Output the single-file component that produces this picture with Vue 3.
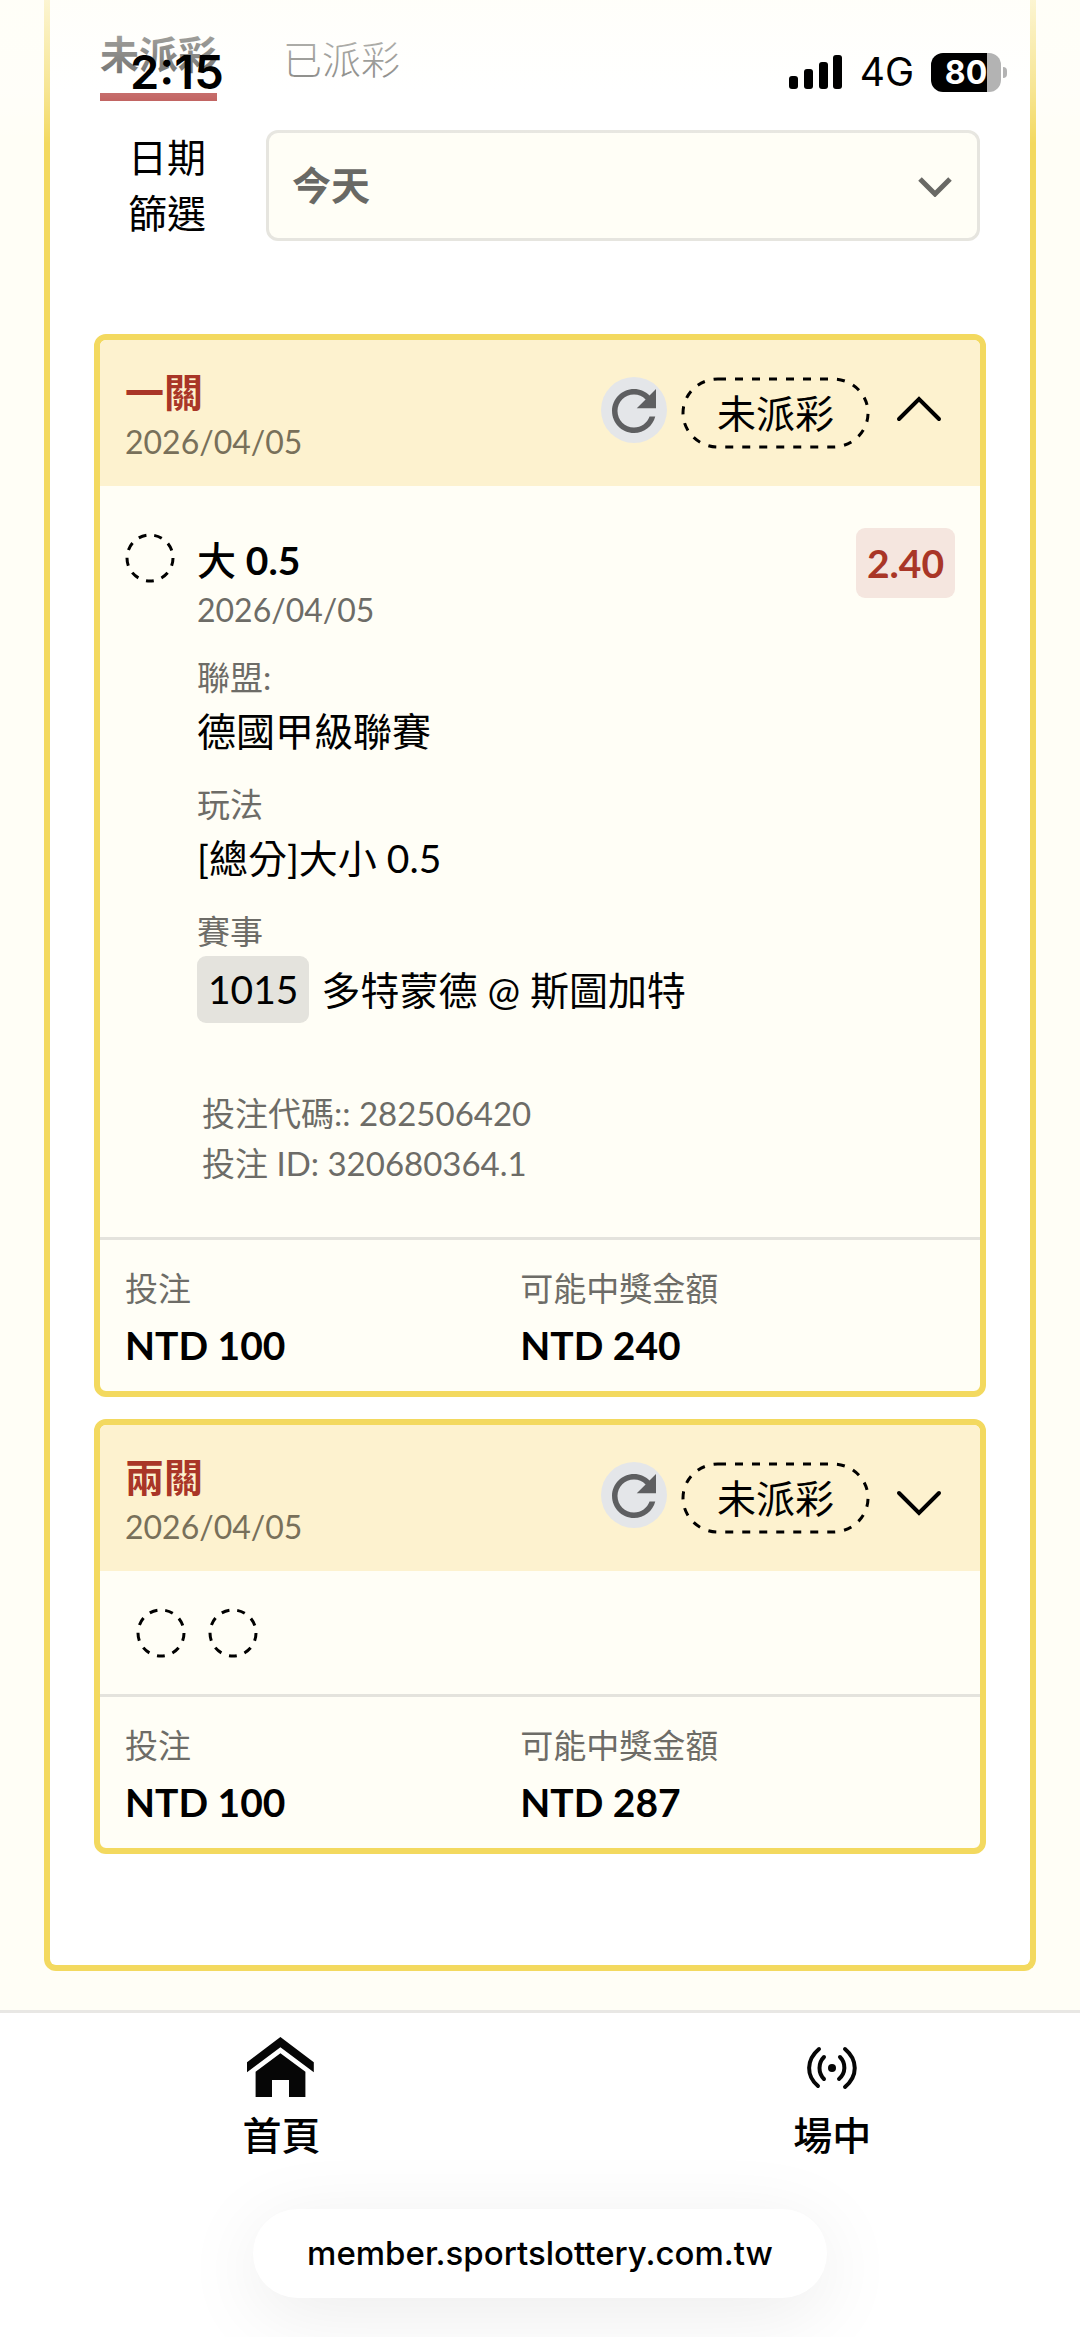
<script setup>
import { ref } from 'vue'

const range = ref('today')

const tickets = ref([
  {
    title: '一關',
    date: '2026/04/05',
    status: '未派彩',
    open: true,
    legs: [
      {
        pick: '大',
        line: '0.5',
        date: '2026/04/05',
        odds: '2.40',
        league: '德國甲級聯賽',
        market: '[總分]大小 0.5',
        code: '1015',
        match: '多特蒙德 @ 斯圖加特'
      }
    ],
    slip: ['投注代碼:: 282506420', '投注 ID: 320680364.1'],
    stake: 'NTD 100',
    payout: 'NTD 240'
  },
  {
    title: '兩關',
    date: '2026/04/05',
    status: '未派彩',
    open: false,
    legs: [{}, {}],
    slip: [],
    stake: 'NTD 100',
    payout: 'NTD 287'
  }
])
</script>

<template>
  <div class="page">
    <header class="status-bar">
      <span class="clock">2:15</span>
      <div class="status-icons">
        <svg class="signal" viewBox="0 0 54 34" aria-hidden="true">
          <rect x="0" y="21" width="9" height="13" rx="3" />
          <rect x="15" y="14" width="9" height="20" rx="3" />
          <rect x="30" y="7" width="9" height="27" rx="3" />
          <rect x="44" y="0" width="9" height="34" rx="3" />
        </svg>
        <span class="network">4G</span>
        <span class="battery"><span class="battery-level">80</span></span>
      </div>
    </header>

    <main class="panel">
      <div class="tabs">
        <button class="tab active" type="button">未派彩</button>
        <button class="tab" type="button">已派彩</button>
      </div>

      <div class="filter">
        <label for="range">日期篩選</label>
        <div class="select-wrap">
          <select id="range" v-model="range">
            <option value="today">今天</option>
          </select>
          <svg class="select-arrow" viewBox="0 0 34 20" aria-hidden="true">
            <path d="M2 2 17 17 32 2" />
          </svg>
        </div>
      </div>

      <section class="tickets">
        <article v-for="t in tickets" :key="t.title" class="ticket">
          <div class="ticket-head">
            <div class="ticket-name">
              <h2>{{ t.title }}</h2>
              <p class="muted date">{{ t.date }}</p>
            </div>
            <button class="refresh" type="button" aria-label="refresh">
              <svg viewBox="0 -0.4 24 24" aria-hidden="true">
                <path d="M17.65 6.35C16.2 4.9 14.21 4 12 4c-4.42 0-7.99 3.58-7.99 8s3.57 8 7.99 8c3.73 0 6.84-2.55 7.73-6h-2.08c-.82 2.33-3.04 4-5.65 4-3.31 0-6-2.69-6-6s2.69-6 6-6c1.66 0 3.14.69 4.22 1.78L13 11h7V4l-2.35 2.35z" />
              </svg>
            </button>
            <span class="state">
              <svg aria-hidden="true"><rect x="2" y="2" rx="35" ry="35" /></svg>
              {{ t.status }}
            </span>
            <button class="toggle" type="button" :aria-expanded="t.open" aria-label="toggle" @click="t.open = !t.open">
              <svg viewBox="0 0 46 40" aria-hidden="true">
                <path :d="t.open ? 'M3 26 23 6 43 26' : 'M3 15 23 35 43 15'" />
              </svg>
            </button>
          </div>

          <div v-if="t.open" class="ticket-body">
            <div v-for="leg in t.legs" :key="leg.code" class="leg">
              <svg class="ring" viewBox="0 0 50 50" aria-hidden="true"><circle cx="25" cy="25" r="23" /></svg>
              <div class="leg-info">
                <h3>{{ leg.pick }} <b>{{ leg.line }}</b></h3>
                <p class="muted date">{{ leg.date }}</p>
                <dl>
                  <div>
                    <dt>聯盟:</dt>
                    <dd>{{ leg.league }}</dd>
                  </div>
                  <div>
                    <dt>玩法</dt>
                    <dd>{{ leg.market }}</dd>
                  </div>
                  <div>
                    <dt>賽事</dt>
                    <dd class="match"><span class="code">{{ leg.code }}</span>{{ leg.match }}</dd>
                  </div>
                </dl>
                <div class="slip">
                  <p v-for="line in t.slip" :key="line" class="muted">{{ line }}</p>
                </div>
              </div>
              <span class="odds">{{ leg.odds }}</span>
            </div>
          </div>
          <div v-else class="ticket-rings">
            <svg v-for="(leg, i) in t.legs" :key="i" class="ring" viewBox="0 0 50 50" aria-hidden="true">
              <circle cx="25" cy="25" r="23" />
            </svg>
          </div>

          <dl class="totals">
            <div>
              <dt>投注</dt>
              <dd>{{ t.stake }}</dd>
            </div>
            <div>
              <dt>可能中獎金額</dt>
              <dd>{{ t.payout }}</dd>
            </div>
          </dl>
        </article>
      </section>
    </main>

    <footer class="bottom">
      <nav>
        <a href="#home">
          <svg class="nav-icon" viewBox="0 0 68 62" aria-hidden="true">
            <path d="M0 25.300 33.400 0 66.800 25.300V35.300L33.400 10.300 0 35.300z" />
            <path d="M8.600 34.700 33.400 16.300 58.400 34.700V60H42V43H25V60H8.600z" />
          </svg>
          首頁
        </a>
        <a href="#live">
          <svg class="nav-icon live" viewBox="-34 -31 68 62" aria-hidden="true">
            <path d="M-13 -19C-26 -8 -26 8 -14 18M13 -19C26 -8 26 8 13 19M-8 -11C-14 -5 -14 5 -8 11M8 -11C14 -5 14 5 7 11" />
            <circle r="4" />
          </svg>
          場中
        </a>
      </nav>
      <div class="address">member.sportslottery.com.tw</div>
    </footer>
  </div>
</template>

<style>
body {
  margin: 0;
  background: #fffef6;
}
</style>

<style scoped>
* {
  box-sizing: border-box;
}

.page {
  position: relative;
  display: flex;
  flex-direction: column;
  min-height: 100vh;
  overflow: hidden;
  background: #fffef6;
  color: #000;
  font-family: Lato, "Noto Sans CJK TC", sans-serif;
  font-size: 39px;
  line-height: 58px;
}

h2,
h3,
p,
dl,
dd {
  margin: 0;
}

button {
  padding: 0;
  border: 0;
  background: none;
  color: inherit;
  font: inherit;
}

.status-bar {
  position: absolute;
  inset: 0 0 auto;
  z-index: 1;
  display: flex;
  align-items: center;
  justify-content: space-between;
  height: 144px;
  padding: 0 73px 0 130px;
  background: linear-gradient(rgba(255, 254, 248, 0.75), rgba(255, 255, 255, 0.3) 65%, rgba(255, 255, 255, 0));
  font-family: Inter, sans-serif;
  pointer-events: none;
}

.clock {
  font-size: 47px;
  font-weight: 600;
}

.status-icons {
  display: flex;
  align-items: center;
}

.signal {
  width: 54px;
  height: 34px;
  margin-right: 17px;
}

.network {
  margin-right: 17px;
  font-size: 39px;
}

.battery {
  position: relative;
  width: 70px;
  height: 39px;
  margin-right: 6px;
  border-radius: 12px;
  background: linear-gradient(90deg, #000 56px, #b3b3b3 56px);
}

.battery::after {
  content: "";
  position: absolute;
  top: 14px;
  right: -6px;
  width: 4px;
  height: 11px;
  border-radius: 0 4px 4px 0;
  background: #b3b3b3;
}

.battery-level {
  display: block;
  color: #fff;
  font-size: 32px;
  font-weight: 700;
  line-height: 39px;
  text-align: center;
}

.panel {
  margin: 0 44px 39px;
  padding: 25px 44px 111px;
  border: 6px solid #f3d95f;
  border-top: 0;
  border-radius: 0 0 12px 12px;
  background: #fff;
}

.tabs {
  display: flex;
  align-items: center;
  gap: 66px;
  padding: 0 6px;
}

.tab {
  border-bottom: 8px solid transparent;
  color: #4c4c48;
  font-weight: 300;
}

.tab.active {
  padding-bottom: 10px;
  border-color: #ad2f2c;
  color: #1c1c1a;
  font-weight: 700;
}

.filter {
  display: flex;
  align-items: center;
  gap: 60px;
  margin-top: 28px;
  padding: 0 6px 0 34px;
}

.filter label {
  flex: none;
  width: 78px;
  line-height: 56px;
}

.select-wrap {
  position: relative;
  flex: 1;
}

.select-wrap select {
  display: block;
  width: 100%;
  height: 111px;
  padding: 0 23px;
  border: 3px solid #e6e5df;
  border-radius: 12px;
  appearance: none;
  background: #fffef6;
  color: #696965;
  font: inherit;
  font-weight: 700;
}

.select-arrow {
  position: absolute;
  top: 47px;
  right: 28px;
  width: 34px;
  height: 20px;
  fill: none;
  stroke: #696965;
  stroke-width: 5;
  pointer-events: none;
}

.tickets {
  display: flex;
  flex-direction: column;
  gap: 22px;
  margin-top: 93px;
}

.ticket {
  overflow: hidden;
  border: 6px solid #f3d95f;
  border-radius: 12px;
  background: #fffef6;
}

.ticket-head {
  display: flex;
  align-items: center;
  height: 146px;
  padding: 0 25px;
  background: #fdf2cf;
}

.ticket-name {
  flex: 1;
  padding-top: 8px;
}

h2,
h3 {
  font-size: 39px;
  line-height: 49px;
}

h2 {
  color: #a93627;
  font-weight: 700;
}

h3 {
  font-weight: 500;
}

.muted {
  color: #6d6c67;
  font-size: 33px;
  line-height: 49px;
}

.date {
  font-size: 32px;
}

.ticket-head .date {
  color: #78705a;
}

.refresh {
  width: 66px;
  height: 66px;
  margin: 0 14px 6px 0;
  border-radius: 50%;
  background: #e4e6e9;
}

.refresh svg {
  display: block;
  width: 66px;
  height: 66px;
  fill: #5e5f61;
}

.state {
  position: relative;
  padding: 7px 36px;
}

.state svg {
  position: absolute;
  inset: 0;
  width: 100%;
  height: 100%;
}

.state rect {
  width: calc(100% - 4px);
  height: calc(100% - 4px);
  fill: none;
  stroke: #000;
  stroke-width: 3;
  stroke-dasharray: 8 9;
}

.toggle {
  width: 46px;
  height: 40px;
  margin: 0 13px 0 26px;
}

.toggle svg {
  display: block;
  width: 46px;
  height: 40px;
  fill: none;
  stroke: #000;
  stroke-width: 4;
  stroke-linecap: round;
}

.ticket-body {
  padding: 42px 25px 49px;
}

.leg {
  display: flex;
  align-items: flex-start;
}

.ring {
  flex: none;
  width: 50px;
  height: 50px;
  fill: none;
  stroke: #000;
  stroke-width: 3;
  stroke-dasharray: 8 8;
}

.leg .ring {
  margin: 5px 22px 0 0;
}

.leg-info {
  flex: 1;
  padding-top: 8px;
}

.leg-info dl {
  display: flex;
  flex-direction: column;
  gap: 19px;
  margin-top: 18px;
}

dt {
  color: #6d6c67;
  font-size: 33px;
  line-height: 50px;
}

.match {
  display: flex;
  align-items: center;
  gap: 12px;
}

.code {
  padding: 4px 11px 5px;
  border-radius: 9px;
  background: #e4e3dd;
}

.slip {
  margin-top: 65px;
  padding-left: 5px;
}

.slip .muted {
  line-height: 50px;
}

.odds {
  padding: 6px 11px;
  border-radius: 9px;
  background: #f5e6df;
  color: #a93627;
  font-weight: 700;
}

.ticket-rings {
  display: flex;
  gap: 22px;
  padding: 37px 36px 36px;
}

.totals {
  display: grid;
  grid-template-columns: 10fr 11fr;
  padding: 23px 25px 17px;
  border-top: 3px solid #e4e3dd;
}

.totals dd {
  margin-top: 3px;
  font-weight: 700;
}

.bottom {
  flex: 1;
  border-top: 3px solid #e8e7e4;
  background: #fff;
}

nav {
  display: flex;
  width: 100%;
  margin-left: 6px;
  padding-top: 24px;
}

nav a {
  display: flex;
  flex: 0 0 51%;
  flex-direction: column;
  align-items: center;
  gap: 7px;
  color: #000;
  font-weight: 500;
  text-decoration: none;
}

.nav-icon {
  width: 68px;
  height: 62px;
  fill: #060606;
}

.live path {
  fill: none;
  stroke: #060606;
  stroke-width: 4;
  stroke-linecap: round;
}

.address {
  width: fit-content;
  margin: 45px auto 39px;
  padding: 15px 54px 16px;
  border-radius: 45px;
  background: #fff;
  box-shadow: 0 15px 80px rgba(0, 0, 0, 0.08);
  font-family: Inter, sans-serif;
  font-size: 33px;
  font-weight: 500;
}
</style>
